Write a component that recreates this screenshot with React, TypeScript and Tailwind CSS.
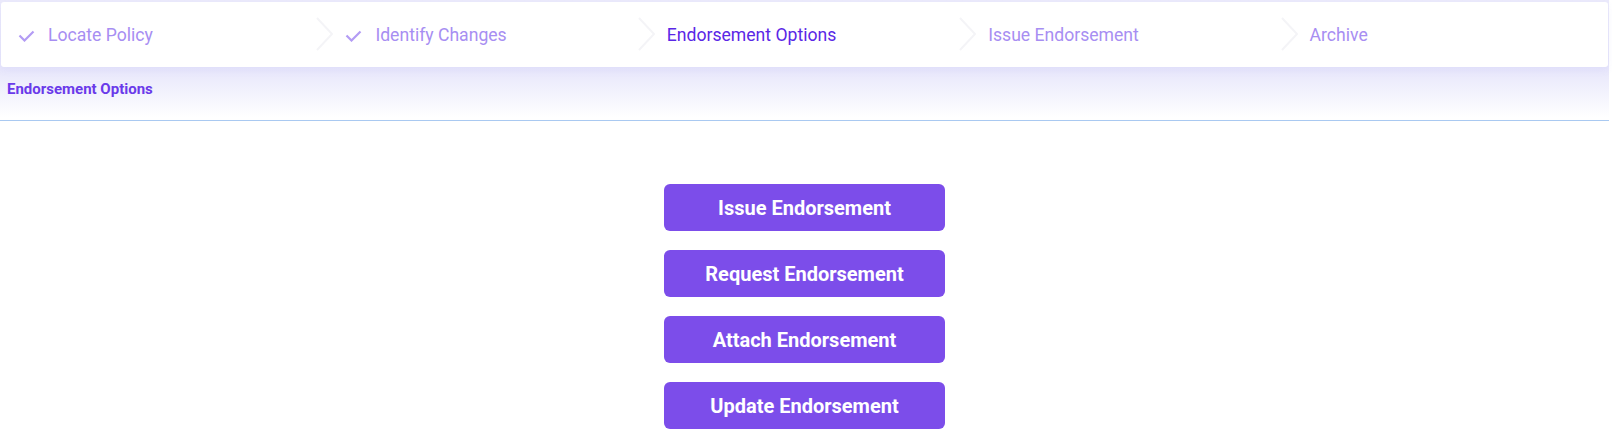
import React from 'react';

type Step = { label: string; done?: boolean; active?: boolean };

const steps: Step[] = [
  { label: 'Locate Policy', done: true },
  { label: 'Identify Changes', done: true },
  { label: 'Endorsement Options', active: true },
  { label: 'Issue Endorsement' },
  { label: 'Archive' },
];

const actions = ['Issue Endorsement', 'Request Endorsement', 'Attach Endorsement', 'Update Endorsement'];

const Chevron = () => (
  <svg
    className="absolute left-[-7px] top-[15px]"
    width="20"
    height="34"
    viewBox="0 0 20 34"
    fill="none"
  >
    <path d="M2 1 L17 17 L2 33" stroke="#f4f4f7" strokeWidth="2" />
  </svg>
);

const Check = () => (
  <svg width="17" height="12" viewBox="0 0 17 12" fill="none">
    <path d="M1.5 5.5 L6.5 10.5 L15.5 1.5" stroke="#b39cf4" strokeWidth="2.2" />
  </svg>
);

export default function App() {
  return (
    <div className="w-full min-h-screen bg-white" style={{ fontFamily: 'Roboto, "Noto Sans", sans-serif' }}>
      <div className="w-[1609px]">
        {/* Stepper + title */}
        <div className="bg-[linear-gradient(to_bottom,#ebeafb_0px,#e7e6fb_68px,#ffffff_118px)] border-b border-[#a9c9f1] pt-[2px] h-[121px]">
          <div className="ml-[1px] mr-[1px] h-[65px] bg-white rounded-[3px] shadow-[0_3px_8px_rgba(120,110,220,0.07)] grid grid-cols-5">
            {steps.map((s, i) => (
              <div
                key={s.label}
                className={`relative flex items-center pt-[2px] ${i === 0 ? 'pl-[17px]' : 'pl-[23px]'}`}
              >
                {i > 0 && <Chevron />}
                {s.done && (
                  <span className="mr-[13px] flex items-center">
                    <Check />
                  </span>
                )}
                <span
                  className={`text-[17.6px] ${s.active ? 'text-[#5a27e6]' : 'text-[#a78ef2]'}`}
                >
                  {s.label}
                </span>
              </div>
            ))}
          </div>
          <div className="pl-[7px] pt-[13px] text-[15px] font-bold text-[#6a3aea] leading-[18px]">
            Endorsement Options
          </div>
        </div>

        {/* Actions */}
        <div className="flex flex-col items-center gap-[19px] pt-[63px]">
          {actions.map((a) => (
            <button
              key={a}
              className="w-[281px] h-[47px] rounded-[6px] bg-[#7c4dea] text-white text-[20px] font-bold"
            >
              {a}
            </button>
          ))}
        </div>
      </div>
    </div>
  );
}
